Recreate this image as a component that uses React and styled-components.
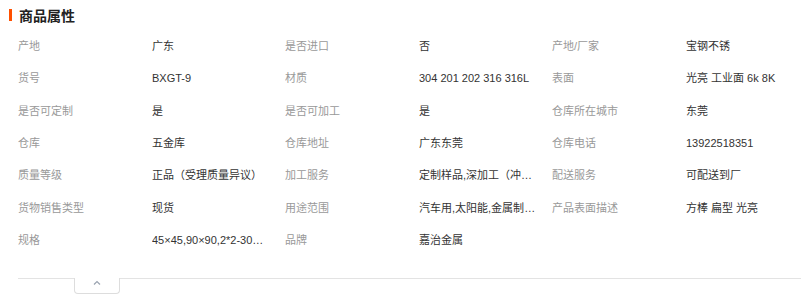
import styled, { createGlobalStyle } from "styled-components";

const GlobalStyle = createGlobalStyle`
    body {
        margin: 0;
        background: #fff;
        overflow: hidden;
        font-family: "Liberation Sans Narrow", "Liberation Sans", "Noto Sans CJK SC", sans-serif;
    }
`;

const Panel = styled.section`
    width: 801px;
    padding-top: 7px;
`;

const Title = styled.h2`
    display: flex;
    align-items: center;
    gap: 7px;
    margin: 0 0 0 9px;
    height: 16px;
    font-size: 14px;
    font-weight: 700;
    color: #222;
    font-family: "Noto Sans CJK SC", sans-serif;

    &::before {
        content: "";
        width: 3px;
        height: 12px;
        background: #ff5000;
    }
`;

const Grid = styled.div`
    display: grid;
    grid-template-columns: 134px 133px 134px 133px 134px 1fr;
    grid-auto-rows: 32.3px;
    margin: 7px 0 0 18px;
    align-items: center;
`;

const Cell = styled.div`
    font-size: 11px;
    line-height: 16px;
    color: ${(p) => (p.$label ? "#999" : "#333")};
    white-space: nowrap;
    overflow: hidden;
    text-overflow: ellipsis;
    max-width: ${(p) => (p.$label ? "none" : "117px")};
`;

const Footer = styled.div`
    display: flex;
    margin: 22px 0 0 18px;
    border-top: 1px solid #e3e3e3;
`;

const Toggle = styled.button`
    display: flex;
    justify-content: center;
    width: 46px;
    height: 16px;
    margin: -1px 0 0 56px;
    padding: 2px 0 0;
    background: #fff;
    border: 1px solid #ddd;
    border-top: none;
    border-radius: 0 0 4px 4px;
    cursor: pointer;
`;

const rows = [
    ["产地", "广东", "是否进口", "否", "产地/厂家", "宝钢不锈"],
    ["货号", "BXGT-9", "材质", "304 201 202 316 316L", "表面", "光亮 工业面 6k 8K"],
    ["是否可定制", "是", "是否可加工", "是", "仓库所在城市", "东莞"],
    ["仓库", "五金库", "仓库地址", "广东东莞", "仓库电话", "13922518351"],
    ["质量等级", "正品（受理质量异议）", "加工服务", "定制样品,深加工（冲压,切割,折弯）", "配送服务", "可配送到厂"],
    ["货物销售类型", "现货", "用途范围", "汽车用,太阳能,金属制品,厨具", "产品表面描述", "方棒 扁型 光亮"],
    ["规格", "45×45,90×90,2*2-300*300", "品牌", "嘉治金属"],
];

export default function App() {
    return (
        <>
            <GlobalStyle />
            <Panel>
                <Title>商品属性</Title>
                <Grid>
                    {rows.map((row, i) =>
                        row.map((text, j) => (
                            <Cell key={i + "-" + j} $label={j % 2 === 0}>
                                {text}
                            </Cell>
                        ))
                    )}
                </Grid>
                <Footer>
                    <Toggle aria-label="收起">
                        <svg width="8" height="5" viewBox="0 0 8 5">
                            <polyline points="1,4.5 4,1.5 7,4.5" fill="none" stroke="#9aa3b0" strokeWidth="1.2" />
                        </svg>
                    </Toggle>
                </Footer>
            </Panel>
        </>
    );
}
